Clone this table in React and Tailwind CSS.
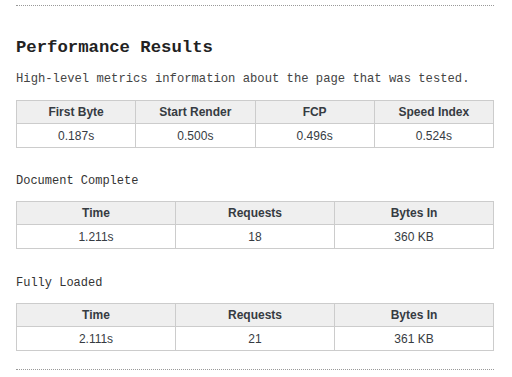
export default function App() {
  const mono = { fontFamily: '"Liberation Mono", "DejaVu Sans Mono", monospace' };
  const Table = ({ heads, vals, className }) => (
    <table
      className={`w-[478px] border-collapse table-fixed text-[12px] text-[#363b42] ${className}`}
      style={{ fontFamily: '"Liberation Sans", Arial, sans-serif' }}
    >
      <thead>
        <tr className="bg-[#efefef]">
          {heads.map((h) => (
            <th key={h} className="border border-[#cccccc] h-[23px] p-0 font-bold text-center">
              {h}
            </th>
          ))}
        </tr>
      </thead>
      <tbody>
        <tr>
          {vals.map((v, i) => (
            <td key={i} className="border border-[#cccccc] h-[24px] p-0 text-center">
              {v}
            </td>
          ))}
        </tr>
      </tbody>
    </table>
  );
  return (
    <div className="w-[512px] h-[377px] bg-white overflow-hidden pl-4" style={mono}>
      <div className="w-[478px] mt-[5px] border-t border-dotted border-[#999]" />
      <h2 className="mt-[30px] text-[17.28px] leading-[24px] font-bold text-[#222]">Performance Results</h2>
      <p className="mt-[11px] text-[12.2px] leading-[16px] text-[#444] whitespace-nowrap">
        High-level metrics information about the page that was tested.
      </p>
      <Table
        className="mt-[13px]"
        heads={["First Byte", "Start Render", "FCP", "Speed Index"]}
        vals={["0.187s", "0.500s", "0.496s", "0.524s"]}
      />
      <p className="mt-[25px] text-[12px] leading-[16px] text-[#333]">Document Complete</p>
      <Table
        className="mt-[12px]"
        heads={["Time", "Requests", "Bytes In"]}
        vals={["1.211s", "18", "360 KB"]}
      />
      <p className="mt-[26px] text-[12px] leading-[16px] text-[#333]">Fully Loaded</p>
      <Table
        className="mt-[12px]"
        heads={["Time", "Requests", "Bytes In"]}
        vals={["2.111s", "21", "361 KB"]}
      />
      <div className="w-[478px] mt-[18px] border-t border-dotted border-[#999]" />
    </div>
  );
}
